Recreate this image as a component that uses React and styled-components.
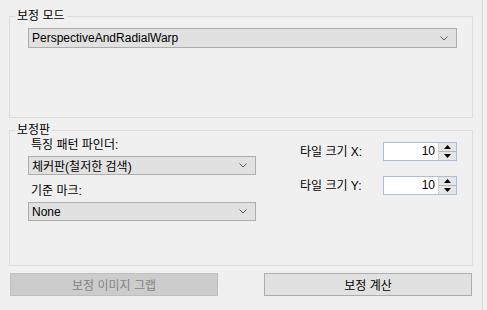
import React from 'react';
import styled, { createGlobalStyle } from 'styled-components';

const GlobalStyle = createGlobalStyle`
  html, body {
    margin: 0;
    padding: 0;
    background: #f0f0f0;
  }
  body {
    font-family: "Liberation Sans", "Noto Sans CJK KR", sans-serif;
    font-size: 12px;
    color: #000;
  }
`;

const Window = styled.div`
  width: 487px;
  height: 310px;
  display: flex;
  background: #f0f0f0;
  overflow: hidden;
`;

const Pane = styled.div`
  width: 482px;
  box-sizing: border-box;
  padding: 9px 9px 0 9px;
  display: flex;
  flex-direction: column;
`;

const Splitter = styled.div`
  width: 1px;
  background: #dadada;
`;

const Group = styled.fieldset`
  margin: 0 0 ${(p) => p.$gap || 0}px 0;
  padding: 0 0 0 5px;
  border: 1px solid #dcdcdc;
  min-width: 0;
`;

const Legend = styled.legend`
  padding: 0 2px;
  line-height: 14px;
  font-size: 12px;
`;

const ModeBody = styled.div`
  height: 94px;
  box-sizing: border-box;
  padding: 5px 0 0 13px;
`;

const BoardBody = styled.div`
  height: 128px;
  box-sizing: border-box;
  padding: 1px 0 0 13px;
  display: flex;
  gap: 44px;
`;

const Column = styled.div`
  width: ${(p) => p.$width}px;
  display: flex;
  flex-direction: column;
`;

const Label = styled.div`
  line-height: 14px;
  height: 14px;
  padding-left: 3px;
  margin: ${(p) => p.$top || 0}px 0 4px;
  white-space: nowrap;
`;

const Combo = styled.div`
  width: ${(p) => p.$width}px;
  height: ${(p) => p.$height || 20}px;
  box-sizing: border-box;
  border: 1px solid #adadad;
  background: #e1e1e1;
  display: flex;
  align-items: center;
  justify-content: space-between;
  padding: 0 8px 0 3px;
  white-space: nowrap;
`;

const Chevron = () => (
  <svg width="8" height="5" viewBox="0 0 8 5">
    <polyline points="0.5,0.5 4,4 7.5,0.5" fill="none" stroke="#5a5a5a" strokeWidth="1" />
  </svg>
);

const SpinRow = styled.div`
  display: flex;
  align-items: center;
  margin-top: ${(p) => p.$top || 0}px;
`;

const SpinLabel = styled.div`
  width: 83px;
  line-height: 14px;
  white-space: nowrap;
`;

const SpinBox = styled.div`
  width: 74px;
  height: 19px;
  box-sizing: border-box;
  border: 1px solid #a8bedb;
  background: #fff;
  display: flex;
  align-items: stretch;
`;

const SpinValue = styled.div`
  flex: 1;
  text-align: right;
  padding-right: 3px;
  line-height: 17px;
`;

const SpinButtons = styled.div`
  width: 17px;
  display: flex;
  flex-direction: column;
  background: #e6e6e6;
  border-left: 1px solid #d0d0d0;
`;

const SpinHalf = styled.div`
  flex: 1;
  display: flex;
  align-items: center;
  justify-content: center;
  border-bottom: ${(p) => (p.$top ? '1px solid #b4b4b4' : 'none')};
`;

const Arrow = ({ up }) => (
  <svg width="7" height="4" viewBox="0 0 7 4">
    <polygon points={up ? '0,4 7,4 3.5,0' : '0,0 7,0 3.5,4'} fill="#000" />
  </svg>
);

const Spinner = ({ value }) => (
  <SpinBox>
    <SpinValue>{value}</SpinValue>
    <SpinButtons>
      <SpinHalf $top>
        <Arrow up />
      </SpinHalf>
      <SpinHalf>
        <Arrow />
      </SpinHalf>
    </SpinButtons>
  </SpinBox>
);

const ButtonRow = styled.div`
  display: flex;
  justify-content: space-between;
  padding: 0 1px;
  margin-top: 7px;
`;

const Button = styled.div`
  width: 208px;
  height: 23px;
  box-sizing: border-box;
  border: 1px solid ${(p) => (p.$disabled ? '#bfbfbf' : '#adadad')};
  background: ${(p) => (p.$disabled ? '#cccccc' : '#e1e1e1')};
  color: ${(p) => (p.$disabled ? '#838383' : '#000')};
  display: flex;
  align-items: center;
  justify-content: center;
`;

export default function App() {
  return (
    <Window>
      <GlobalStyle />
      <Pane>
        <Group $gap={5}>
          <Legend>보정 모드</Legend>
          <ModeBody>
            <Combo $width={429}>
              <span>PerspectiveAndRadialWarp</span>
              <Chevron />
            </Combo>
          </ModeBody>
        </Group>
        <Group>
          <Legend>보정판</Legend>
          <BoardBody>
            <Column $width={228}>
              <Label>특징 패턴 파인더:</Label>
              <Combo $width={228} $height={19}>
                <span>체커판(철저한 검색)</span>
                <Chevron />
              </Combo>
              <Label $top={9}>기준 마크:</Label>
              <Combo $width={228} $height={19}>
                <span>None</span>
                <Chevron />
              </Combo>
            </Column>
            <Column $width={157}>
              <SpinRow $top={4}>
                <SpinLabel>타일 크기 X:</SpinLabel>
                <Spinner value="10" />
              </SpinRow>
              <SpinRow $top={15}>
                <SpinLabel>타일 크기 Y:</SpinLabel>
                <Spinner value="10" />
              </SpinRow>
            </Column>
          </BoardBody>
        </Group>
        <ButtonRow>
          <Button $disabled>보정 이미지 그랩</Button>
          <Button>보정 계산</Button>
        </ButtonRow>
      </Pane>
      <Splitter />
    </Window>
  );
}
